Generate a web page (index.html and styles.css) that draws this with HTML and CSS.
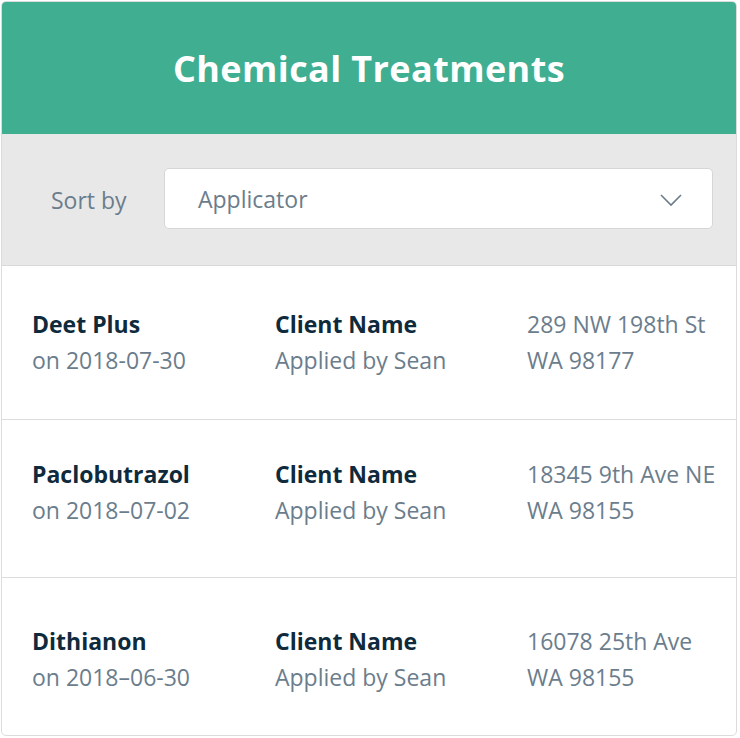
FILE: index.html
```html
<!DOCTYPE html>
<html>
  <head>
    <title>Chemical Treatments</title>
    <link rel="stylesheet" href="styles.css">
  </head>
  <body>
    <div class="card">
      <div class="card-header">Chemical Treatments</div>
      <div class="sort-bar">
        <span class="sort-label">Sort by</span>
        <div class="select">
          <span>Applicator</span>
          <svg class="chevron" width="22" height="13" viewBox="0 0 22 13">
            <path d="M1 1 L11 11 L21 1" fill="none" stroke="#6b7d8c" stroke-width="1.6"/>
          </svg>
        </div>
      </div>
      <ul class="treatments">
        <li class="treatment first">
          <div class="col col-product">
            <div class="strong">Deet Plus</div>
            <div class="muted">on 2018-07-30</div>
          </div>
          <div class="col col-client">
            <div class="strong">Client Name</div>
            <div class="muted">Applied by Sean</div>
          </div>
          <div class="col col-address">
            <div class="muted">289 NW 198th St</div>
            <div class="muted">WA 98177</div>
          </div>
        </li>
        <li class="treatment second">
          <div class="col col-product">
            <div class="strong">Paclobutrazol</div>
            <div class="muted">on 2018&ndash;07-02</div>
          </div>
          <div class="col col-client">
            <div class="strong">Client Name</div>
            <div class="muted">Applied by Sean</div>
          </div>
          <div class="col col-address">
            <div class="muted">18345 9th Ave NE</div>
            <div class="muted">WA 98155</div>
          </div>
        </li>
        <li class="treatment third">
          <div class="col col-product">
            <div class="strong">Dithianon</div>
            <div class="muted">on 2018&ndash;06-30</div>
          </div>
          <div class="col col-client">
            <div class="strong">Client Name</div>
            <div class="muted">Applied by Sean</div>
          </div>
          <div class="col col-address">
            <div class="muted">16078 25th Ave</div>
            <div class="muted">WA 98155</div>
          </div>
        </li>
      </ul>
    </div>
  </body>
</html>
```

FILE: styles.css
```css
body { margin: 0; padding: 1px; background: #fff; font-family: "Open Sans", "Noto Sans", sans-serif; }

.card { width: 736px; height: 735px; border: 1px solid #dcdcdc; border-radius: 5px; overflow: hidden; box-sizing: border-box; background: #fff; }

.card-header { height: 132px; background: #40ae91; color: #fff; font-size: 36px; font-weight: 700; letter-spacing: 0.4px; display: flex; align-items: center; justify-content: center; }

.sort-bar { height: 131px; background: #e8e8e8; border-bottom: 1px solid #d8d8d8; display: flex; align-items: center; padding: 0 23px 0 49px; }
.sort-label { font-size: 23px; color: #6b7d8c; width: 113px; }
.select { flex-grow: 1; height: 61px; box-sizing: border-box; background: #fff; border: 1px solid #d6d6d6; border-radius: 5px; display: flex; align-items: center; justify-content: space-between; padding: 0 30px 0 33px; font-size: 23px; color: #6b7d8c; margin-bottom: 2px; }
.chevron { display: block; margin-top: 3px; }

.treatments { list-style-type: none; margin: 0; padding: 0; }
.treatment { display: flex; padding-left: 30px; border-bottom: 1px solid #dcdcdc; font-size: 23px; line-height: 36px; }
.treatment:last-child { border-bottom: none; }
.treatment.first { padding-top: 40px; padding-bottom: 41px; }
.treatment.second { padding-top: 36px; padding-bottom: 49px; }
.treatment.third { padding-top: 45px; padding-bottom: 43px; }

.col-product { width: 243px; }
.col-client { width: 252px; }
.col-address { white-space: nowrap; }
.strong { font-weight: 700; color: #0e2a3c; }
.muted { color: #6b7d8c; }
```
